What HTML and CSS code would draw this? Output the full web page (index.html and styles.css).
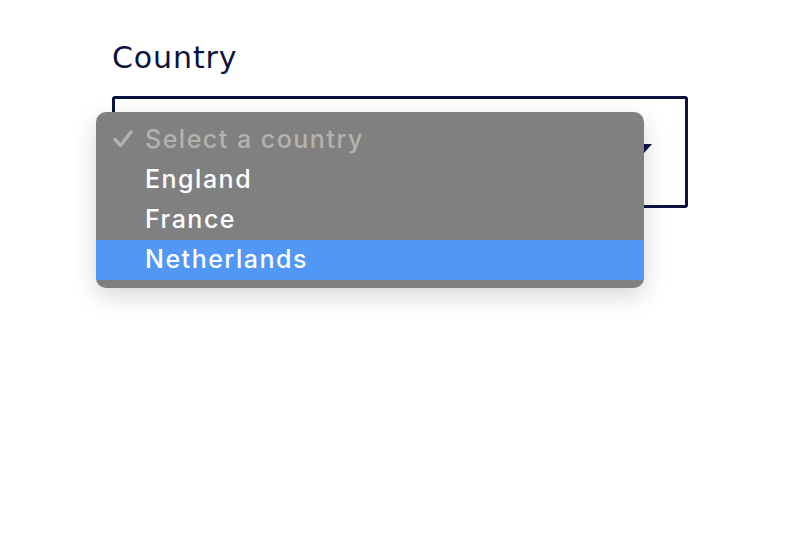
FILE: index.html
```html
<!DOCTYPE html>
<html>
<head>
<meta charset="utf-8">
<link rel="stylesheet" href="styles.css">
</head>
<body>
<div class="field">
  <label class="label">Country</label>
  <div class="select-wrap">
    <div class="select">
      <span class="arrow"></span>
    </div>
    <ul class="menu">
      <li class="item disabled"><svg class="check" width="22" height="20" viewBox="0 0 22 20"><path d="M3 10.5 L8.5 16.5 L19 3" fill="none" stroke="#b5b2ad" stroke-width="3.4" stroke-linecap="round" stroke-linejoin="round"/></svg>Select a country</li>
      <li class="item">England</li>
      <li class="item">France</li>
      <li class="item active">Netherlands</li>
    </ul>
  </div>
</div>
</body>
</html>
```
FILE: styles.css
```css
html, body {
  margin: 0;
  padding: 0;
  background: #ffffff;
  min-height: 544px;
}
.field {
  padding: 38px 0 0 112px;
  width: 576px;
}
.label {
  display: block;
  font-family: "DejaVu Sans", "Noto Sans", sans-serif;
  font-size: 30px;
  color: #0b1440;
  line-height: 40px;
  letter-spacing: 0.9px;
  margin-bottom: 18px;
}
.select-wrap {
  position: relative;
}
.select {
  height: 106px;
  border: 3px solid #0b1440;
  border-radius: 3px;
  position: relative;
}
.arrow {
  position: absolute;
  right: 33px;
  top: 45px;
  width: 0;
  height: 0;
  border-left: 8px solid transparent;
  border-right: 8px solid transparent;
  border-top: 9px solid #0b1440;
}
.menu {
  position: absolute;
  left: -16px;
  top: 16px;
  width: 548px;
  margin: 0;
  padding: 8px 0;
  list-style: none;
  background: #808080;
  border-radius: 10px;
  box-shadow: 0 8px 24px rgba(0, 0, 0, 0.16);
  font-family: "Inter", "Noto Sans", sans-serif;
  font-size: 25px;
  font-weight: 500;
}
.item {
  height: 40px;
  line-height: 38px;
  padding-left: 49px;
  color: #ffffff;
  position: relative;
  letter-spacing: 1.5px;
}
.item.disabled {
  color: #b5b2ad;
}
.check {
  position: absolute;
  left: 16px;
  top: 9px;
}
.item.active {
  background: #5197f5;
}
```
